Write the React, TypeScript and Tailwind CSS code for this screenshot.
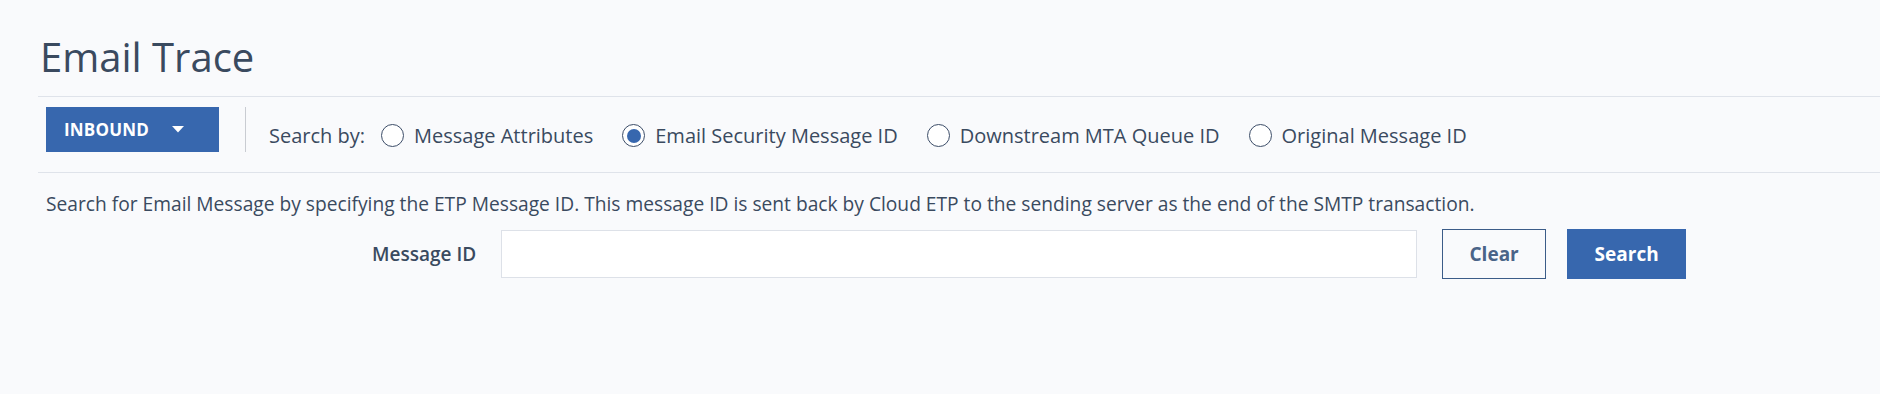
import React from "react";

function Radio({ checked, label }: { checked?: boolean; label: string }) {
  return (
    <label className="flex items-center">
      <span className="flex h-[23px] w-[23px] items-center justify-center rounded-full border border-[#3c4d68] bg-white">
        {checked && <span className="h-[14px] w-[14px] rounded-full bg-[#3767ae]" />}
      </span>
      <span className="ml-[10px] text-[20px] text-[#3a4a5f]">{label}</span>
    </label>
  );
}

export default function App() {
  return (
    <div
      className="h-[394px] w-full bg-[#f9fafc]"
      style={{ fontFamily: '"Open Sans", "Liberation Sans", sans-serif' }}
    >
      <div className="pt-[33px] pl-[40px]">
        <h1 className="text-[40px] leading-[48px] text-[#3a4a5f]">Email Trace</h1>
      </div>
      <div className="ml-[38px] mt-[15px] border-t border-[#dfe3ea]">
        <div className="flex h-[76px] items-start border-b border-[#dfe3ea] pt-[10px]">
          <button className="ml-[8px] flex h-[45px] w-[173px] items-center bg-[#3767ae] pl-[18px] text-white">
            <span className="text-[17px] font-bold tracking-[0.2px]">INBOUND</span>
            <svg className="ml-[23px]" width="12" height="7" viewBox="0 0 12 7">
              <path d="M0 0 L12 0 L6 6.5 Z" fill="white" />
            </svg>
          </button>
          <div className="ml-[26px] h-[45px] w-px bg-[#c9ccd2]" />
          <div className="mt-[6px] flex h-[45px] items-center">
            <span className="ml-[23px] text-[20px] text-[#3a4a5f]">Search by:</span>
            <div className="ml-[16px] flex items-center gap-[29px]">
              <Radio label="Message Attributes" />
              <Radio checked label="Email Security Message ID" />
              <Radio label="Downstream MTA Queue ID" />
              <Radio label="Original Message ID" />
            </div>
          </div>
        </div>
        <p className="mt-[19px] ml-[8px] text-[19.2px] leading-[24px] text-[#3a4a5f]">
          Search for Email Message by specifying the ETP Message ID. This message ID is sent back by Cloud ETP to the sending server as the end of the SMTP transaction.
        </p>
        <div className="mt-[13px] flex items-center pl-[334px]">
          <span className="text-[19px] font-semibold text-[#3a4a5f]">Message ID</span>
          <input
            className="ml-[25px] h-[48px] w-[916px] border border-[#dde1e8] bg-white px-3 outline-none"
            type="text"
          />
          <button className="ml-[25px] h-[50px] w-[104px] border-[1.5px] border-[#3b5c88] text-[19px] font-bold text-[#4a6488]">
            Clear
          </button>
          <button className="ml-[21px] h-[50px] w-[119px] bg-[#3767ae] text-[19px] font-bold text-white">
            Search
          </button>
        </div>
      </div>
    </div>
  );
}
